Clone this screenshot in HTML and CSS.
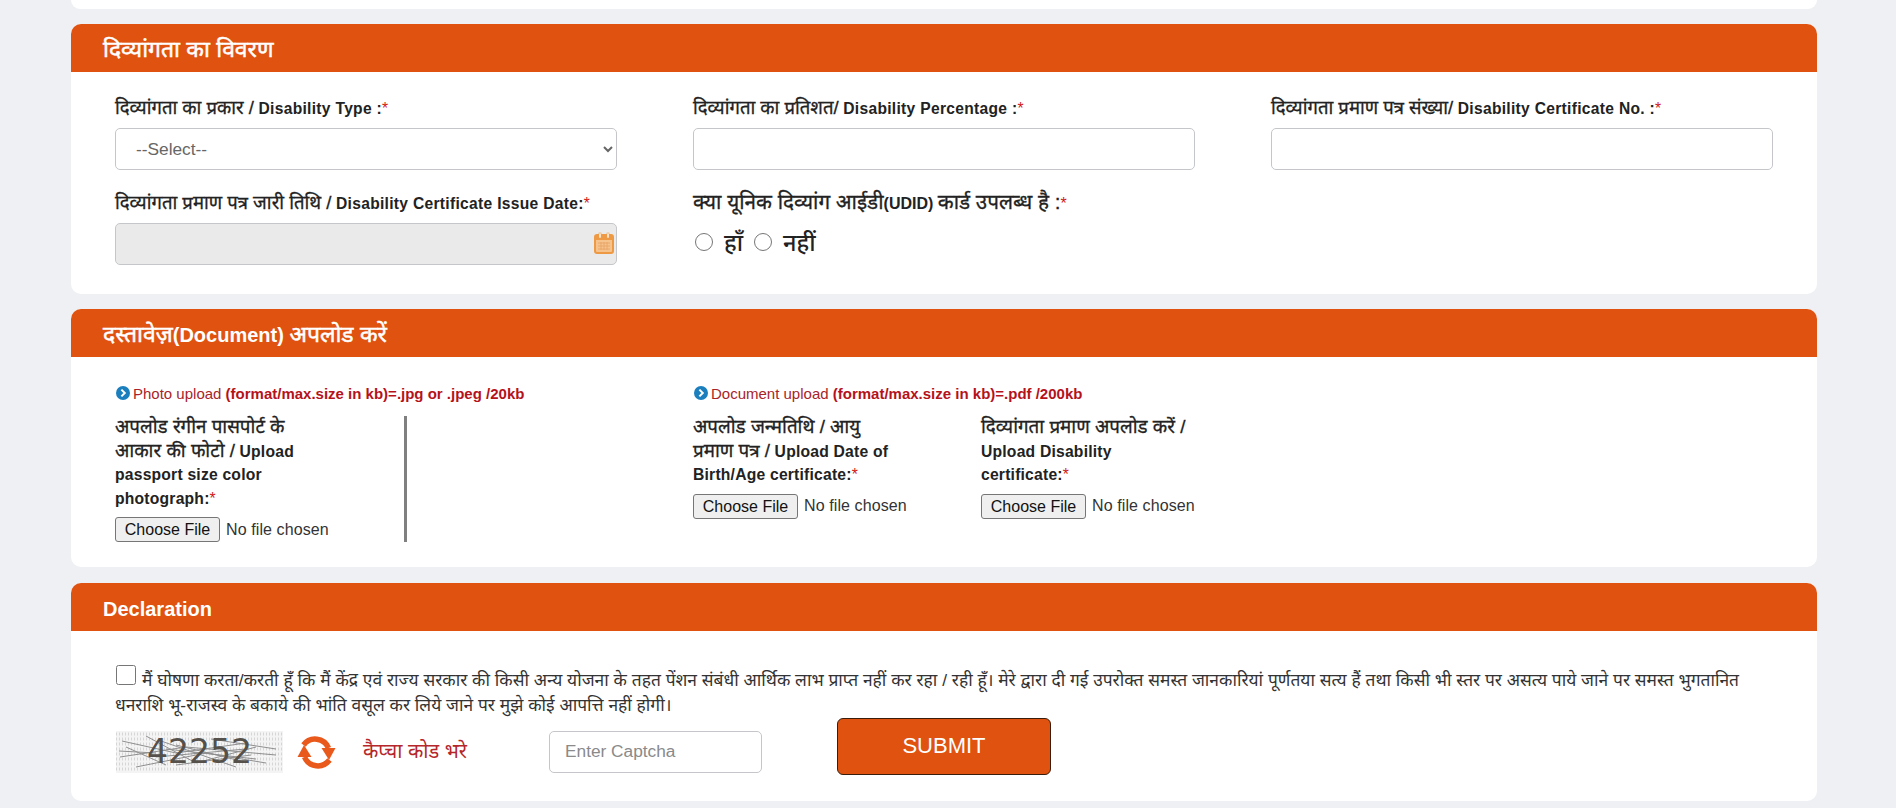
FILE: index.html
```html
<!DOCTYPE html>
<html lang="hi">
<head>
<meta charset="utf-8">
<title>दिव्यांगता का विवरण</title>
<link rel="stylesheet" href="styles.css">
</head>
<body>
<main class="page">
  <div class="sliver"></div>

  <section class="card">
    <h2 class="card-head"><span class="hi">दिव्यांगता का विवरण</span></h2>
    <div class="card-body disability-grid">
      <div class="field">
        <label class="lbl"><span class="hi">दिव्यांगता का प्रकार /</span> Disability Type :<span class="req">*</span></label>
        <select class="ctl sel"><option>--Select--</option></select>
      </div>
      <div class="field">
        <label class="lbl"><span class="hi">दिव्यांगता का प्रतिशत/</span> Disability Percentage :<span class="req">*</span></label>
        <input class="ctl" type="text">
      </div>
      <div class="field">
        <label class="lbl"><span class="hi">दिव्यांगता प्रमाण पत्र संख्या/</span> Disability Certificate No. :<span class="req">*</span></label>
        <input class="ctl" type="text">
      </div>
      <div class="field">
        <label class="lbl"><span class="hi">दिव्यांगता प्रमाण पत्र जारी तिथि /</span> Disability Certificate Issue Date:<span class="req">*</span></label>
        <div class="date-wrap">
          <input class="ctl date" type="text" disabled>
          <svg class="cal" viewBox="0 0 20 22" width="20" height="22" aria-hidden="true">
            <rect x="1" y="3" width="18" height="18" rx="2" fill="#f6c38d" stroke="#ee9a45" stroke-width="2"/>
            <rect x="1" y="3" width="18" height="5" fill="#ee9a45"/>
            <rect x="5" y="1" width="2" height="5" fill="#fff" stroke="#ee9a45" stroke-width=".6"/>
            <rect x="13" y="1" width="2" height="5" fill="#fff" stroke="#ee9a45" stroke-width=".6"/>
            <path d="M4 11h12M4 14h12M4 17h12M7 10v8M10 10v8M13 10v8" stroke="#e8a566" stroke-width=".9" fill="none"/>
          </svg>
        </div>
      </div>
      <div class="field">
        <label class="lbl lbl-big"><span class="hi">क्या यूनिक दिव्यांग आईडी</span>(UDID) <span class="hi">कार्ड उपलब्ध है :</span><span class="req">*</span></label>
        <div class="radios">
          <input class="radio" type="radio" name="udid" id="y"><label class="radio-txt" for="y">हाँ</label>
          <input class="radio" type="radio" name="udid" id="n"><label class="radio-txt" for="n">नहीं</label>
        </div>
      </div>
    </div>
  </section>

  <section class="card">
    <h2 class="card-head"><span class="hi">दस्तावेज़</span>(Document) <span class="hi">अपलोड करें</span></h2>
    <div class="card-body upload-grid">
      <div class="upload-col">
        <p class="note"><svg class="bullet" viewBox="0 0 14 14" width="14" height="14" aria-hidden="true"><circle cx="7" cy="7" r="7" fill="#1b7fbd"/><path d="M5.4 3.6 8.8 7l-3.4 3.4" fill="none" stroke="#fff" stroke-width="2"/></svg>Photo upload <b>(format/max.size in kb)=.jpg or .jpeg /20kb</b></p>
        <div class="cells">
          <div class="cell cell-bar">
            <label class="up-lbl"><span class="hi">अपलोड रंगीन पासपोर्ट के</span><br><span class="hi">आकार की फोटो /</span> Upload<br>passport size color<br>photograph:<span class="req">*</span></label>
            <div class="file"><span class="file-btn">Choose File</span><span class="file-txt">No file chosen</span></div>
          </div>
        </div>
      </div>
      <div class="upload-col">
        <p class="note"><svg class="bullet" viewBox="0 0 14 14" width="14" height="14" aria-hidden="true"><circle cx="7" cy="7" r="7" fill="#1b7fbd"/><path d="M5.4 3.6 8.8 7l-3.4 3.4" fill="none" stroke="#fff" stroke-width="2"/></svg>Document upload <b>(format/max.size in kb)=.pdf /200kb</b></p>
        <div class="cells">
          <div class="cell">
            <label class="up-lbl"><span class="hi">अपलोड जन्मतिथि / आयु</span><br><span class="hi">प्रमाण पत्र /</span> Upload Date of<br>Birth/Age certificate:<span class="req">*</span></label>
            <div class="file"><span class="file-btn">Choose File</span><span class="file-txt">No file chosen</span></div>
          </div>
          <div class="cell">
            <label class="up-lbl"><span class="hi">दिव्यांगता प्रमाण अपलोड करें /</span><br>Upload Disability<br>certificate:<span class="req">*</span></label>
            <div class="file"><span class="file-btn">Choose File</span><span class="file-txt">No file chosen</span></div>
          </div>
        </div>
      </div>
    </div>
  </section>

  <section class="card last">
    <h2 class="card-head">Declaration</h2>
    <div class="card-body decl">
      <p class="decl-text"><input class="check" type="checkbox">मैं घोषणा करता/करती हूँ कि मैं केंद्र एवं राज्य सरकार की किसी अन्य योजना के तहत पेंशन संबंधी आर्थिक लाभ प्राप्त नहीं कर रहा / रही हूँ। मेरे द्वारा दी गई उपरोक्त समस्त जानकारियां पूर्णतया सत्य हैं तथा किसी भी स्तर पर असत्य पाये जाने पर समस्त भुगतानित<br>धनराशि भू-राजस्व के बकाये की भांति वसूल कर लिये जाने पर मुझे कोई आपत्ति नहीं होगी।</p>
      <div class="captcha-row">
        <div class="captcha">
          <svg class="noise" viewBox="0 0 167 42" preserveAspectRatio="none" aria-hidden="true">
            <g fill="none" stroke="#d6d6d6" stroke-width="3" stroke-dasharray="1 2">
              <path d="M0 3h167M0 8h167M0 13h167M0 18h167M0 23h167M0 28h167M0 33h167M0 38h167"/>
            </g>
            <g fill="none" stroke="#8f8f8f" stroke-width="1">
              <path d="M6 10 60 22 130 12M4 26 70 16 160 24M20 36 90 22 150 32M30 5 80 32 140 16M10 16 50 34M45 10 120 36M95 8 160 18M60 34 135 24M3 20 40 22M50 18 140 28M40 26 130 18M60 14 125 30"/>
            </g>
          </svg>
          <span class="captcha-txt">42252</span>
        </div>
        <svg class="refresh" viewBox="0 0 39 39" width="39" height="39" aria-hidden="true">
          <g>
            <path d="M6.5 12A14.5 14.5 0 0 1 31.5 15" fill="none" stroke="#e9591c" stroke-width="5.5"/>
            <path d="M24.5 15H38.5L32 27z" fill="#e9591c"/>
          </g>
          <g transform="rotate(180 19.5 19.5)">
            <path d="M6.5 12A14.5 14.5 0 0 1 31.5 15" fill="none" stroke="#e9591c" stroke-width="5.5"/>
            <path d="M24.5 15H38.5L32 27z" fill="#e9591c"/>
          </g>
        </svg>
        <label class="captcha-lbl">कैप्चा कोड भरे</label>
        <input class="captcha-in" type="text" placeholder="Enter Captcha">
        <button class="submit" type="button">SUBMIT</button>
      </div>
    </div>
  </section>
</main>
</body>
</html>
```

FILE: styles.css
```css
* { box-sizing: border-box; }
html, body { margin: 0; padding: 0; }
body {
  background: #eef0f4;
  font-family: "Liberation Sans", Arial, "Noto Sans", sans-serif;
  color: #222;
  height: 808px;
  overflow: hidden;
}
.page { padding: 0 79px 0 71px; }
.sliver { height: 9px; background: #fff; border-radius: 0 0 10px 10px; margin-bottom: 15px; }
.card { background: #fff; border-radius: 10px; margin-bottom: 15px; overflow: hidden; }
.card.last { margin-top: 16px; margin-bottom: 8px; }
.card-head {
  margin: 0;
  height: 48px;
  line-height: 44px;
  padding: 4px 0 0 32px;
  background: #e0520f;
  color: #fff;
  font-size: 20px;
  font-weight: 700;
  white-space: nowrap;
}
.card-head .hi { font-size: 22.9px; -webkit-text-stroke: .5px currentColor; }
.card-body { padding: 25px 44px 29px; }
.disability-grid { display: grid; grid-template-columns: repeat(3, 502px); column-gap: 76px; row-gap: 22px; }
.lbl { display: block; height: 24px; line-height: 24px; margin-bottom: 7px; font-size: 15.6px; font-weight: 700; letter-spacing: .3px; white-space: nowrap; }
.hi { font-size: 18.5px; font-weight: 400; letter-spacing: 0; line-height: 1; -webkit-text-stroke: .3px currentColor; }
.lbl-big { font-size: 16px; letter-spacing: 0; }
.lbl-big .hi { font-size: 20.7px; }
.req { color: #d01818; font-weight: 400; }
.ctl {
  display: block;
  width: 100%;
  height: 42px;
  border: 1px solid #c4c6ca;
  border-radius: 5px;
  background: #fff;
  font: 17.3px "Liberation Sans", Arial, sans-serif;
  color: #666;
}
.sel { padding-left: 16px; }
.date { background: #eaeaea; }
.date-wrap { position: relative; }
.cal { position: absolute; right: 3px; top: 9px; }
.radios { display: flex; align-items: center; height: 38px; }
.radio { width: 18px; height: 18px; margin: 0 0 0 2px; }
.radio-txt { font-size: 23.5px; margin: 0 9px 0 11px; font-weight: 500; }
.radio-txt + .radio { margin-left: 2px; }
.upload-grid { display: flex; padding: 25px 0 25px 44px; }
.upload-col { width: 578px; }
.note { display: flex; align-items: center; margin: 0 0 12px; height: 22px; font-size: 15px; color: #a8242a; white-space: pre; }
.note b { color: #b5121b; }
.bullet { margin: 0 3px 0 1px; flex: none; }
.cells { display: flex; }
.cell { width: 288px; }
.cell-bar { width: 292px; border-right: 3px solid #808080; }
.up-lbl { display: block; font-size: 15.7px; line-height: 23.5px; font-weight: 700; letter-spacing: .2px; white-space: nowrap; }
.up-lbl .hi { font-size: 18.8px; }
.file { display: flex; align-items: center; height: 25px; margin-top: 7px; font-size: 16px; }
.file-btn { display: block; height: 25px; line-height: 23px; width: 105px; text-align: center; background: #efefef; border: 1px solid #767676; border-radius: 3px; color: #111; }
.file-txt { margin-left: 6px; color: #333; white-space: nowrap; letter-spacing: .1px; }
.decl { padding: 34px 44px 26px; }
.decl-text { margin: 0; font-size: 17.4px; line-height: 25px; color: #333; white-space: nowrap; }
.check { width: 20px; height: 20px; margin: 0 6px 0 1px; vertical-align: 1px; }
.captcha-row { display: flex; align-items: flex-start; }
.captcha {
  position: relative;
  width: 167px;
  height: 42px;
  margin: 13px 0 0 1px;
  text-align: center;
  background: #f4f4f4;
  line-height: 42px;
  overflow: hidden;
  flex: none;
}
.noise { position: absolute; inset: 0; width: 100%; height: 100%; }
.captcha-txt { position: relative; font: 33px/42px "DejaVu Sans", sans-serif; color: #55504a; }
.refresh { margin: 15px 0 0 14px; flex: none; }
.captcha-lbl { margin: 20px 0 0 27px; width: 186px; flex: none; font-size: 20px; line-height: 26px; color: #b5272a; }
.captcha-in { width: 213px; height: 42px; margin-top: 13px; padding: 0 15px 2px; border: 1px solid #c4c6ca; border-radius: 5px; font: 17.3px "Liberation Sans", Arial, sans-serif; flex: none; }
.captcha-in::placeholder { color: #8a8a8a; opacity: 1; }
.submit { width: 214px; height: 57px; margin-left: 75px; padding-bottom: 3px; background: #e0520f; color: #fff; border: 1px solid #3b1d0c; border-radius: 6px; font: 22px "Liberation Sans", Arial, sans-serif; flex: none; }
```
